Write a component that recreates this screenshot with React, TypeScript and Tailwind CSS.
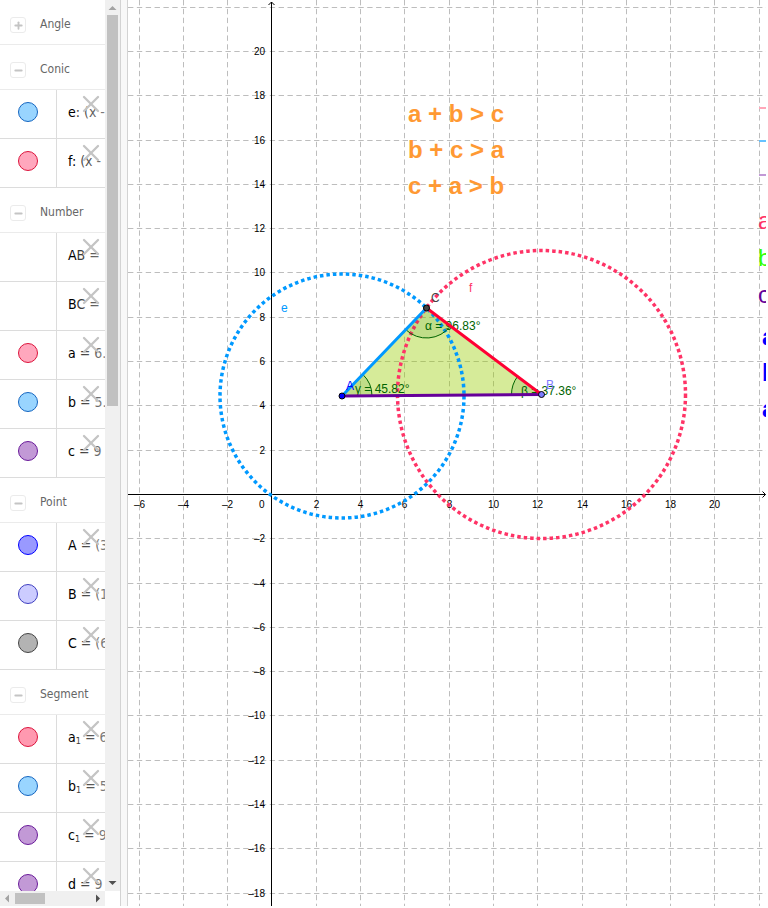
import { Minus, Plus, X } from "lucide-react";

interface Item {
  label: string;
  sub?: string;
  rest: string;
  dot?: string;
}

interface Group {
  name: string;
  open: boolean;
  items: Item[];
}

const RED = "border-[#dc143c] bg-[#ffa7bd]";
const BLUE = "border-[#1565c0] bg-[#99d5ff]";
const PURPLE = "border-[#6a1b9a] bg-[#c299d6]";

const groups: Group[] = [
  { name: "Angle", open: false, items: [] },
  {
    name: "Conic",
    open: true,
    items: [
      { label: "e:", rest: "(x -", dot: BLUE },
      { label: "f:", rest: "(x -", dot: RED },
    ],
  },
  {
    name: "Number",
    open: true,
    items: [
      { label: "AB", rest: "=" },
      { label: "BC", rest: "=" },
      { label: "a", rest: "= 6.", dot: RED },
      { label: "b", rest: "= 5.", dot: BLUE },
      { label: "c", rest: "= 9", dot: PURPLE },
    ],
  },
  {
    name: "Point",
    open: true,
    items: [
      { label: "A", rest: "= (3", dot: "border-[#0000ff] bg-[#9999ff]" },
      { label: "B", rest: "= (1", dot: "border-[#3f3fbf] bg-[#ccccff]" },
      { label: "C", rest: "= (6", dot: "border-[#444444] bg-[#b3b3b3]" },
    ],
  },
  {
    name: "Segment",
    open: true,
    items: [
      { label: "a", sub: "1", rest: "= 6", dot: "border-[#dc143c] bg-[#ff99b0]" },
      { label: "b", sub: "1", rest: "= 5", dot: BLUE },
      { label: "c", sub: "1", rest: "= 9", dot: PURPLE },
      { label: "d", rest: "= 9", dot: PURPLE },
    ],
  },
];

function Row({ item }: { item: Item }) {
  return (
    <div className="relative flex h-[49px] border-b border-[#dcdcdc]">
      <div className="flex w-[57px] shrink-0 items-center justify-center border-r border-[#dcdcdc] pb-1">
        {item.dot && (
          <button
            aria-label={`Toggle ${item.label}`}
            className={`size-5 rounded-full border ${item.dot}`}
          />
        )}
      </div>
      <div className="flex items-center pb-1 pl-[11px] text-sm whitespace-pre text-black">
        <span>
          {item.label}
          {item.sub && <sub className="text-[9px]">{item.sub}</sub>} {item.rest}
        </span>
      </div>
      <div className="absolute inset-y-0 right-0 w-7 bg-linear-to-r from-white/20 to-white/50">
        <button aria-label={`Delete ${item.label}`} className="block">
          <X size={28} strokeWidth={2} className="text-[#c4c4c4]" />
        </button>
      </div>
    </div>
  );
}

function Sidebar() {
  return (
    <aside className="flex w-[120px] shrink-0 flex-col font-['DejaVu_Sans_Condensed','Noto_Sans',sans-serif]">
      <div className="flex min-h-0 flex-1">
        <div className="w-[105px] overflow-hidden">
          {groups.map((group) => (
            <section key={group.name}>
              <h2 className="flex h-[45px] items-center gap-3.5 border-b border-[#ebebeb] pt-1 pl-2.5 text-xs text-[#666666]">
                <button
                  aria-label={`Toggle ${group.name}`}
                  className="mt-0.5 flex size-4 items-center justify-center rounded-[3px] border border-[#ebebeb] text-[#c4c4c4]"
                >
                  {group.open ? <Minus size={11} strokeWidth={4} /> : <Plus size={11} strokeWidth={4} />}
                </button>
                {group.name}
              </h2>
              {group.items.map((item) => (
                <Row key={item.label} item={item} />
              ))}
            </section>
          ))}
        </div>
        <div className="flex w-[15px] flex-col items-center bg-[#f0f0f0]">
          <svg width="15" height="15">
            <path d="M3.500 10h8l-4-4z" fill="#a3a3a3" />
          </svg>
          <div className="mb-auto h-[391px] w-[11px] bg-[#c1c1c1]" />
          <svg width="15" height="15">
            <path d="M3.500 5h8l-4 4z" fill="#505050" />
          </svg>
        </div>
      </div>
      <div className="flex h-[15px] w-[105px] items-center bg-[#f0f0f0]">
        <svg width="15" height="15">
          <path d="M9 3.500v8l-4-4z" fill="#a3a3a3" />
        </svg>
        <div className="mr-auto h-[11px] w-[30px] bg-[#c1c1c1]" />
        <svg width="15" height="15">
          <path d="M6 3.500v8l4-4z" fill="#505050" />
        </svg>
      </div>
    </aside>
  );
}

// Graphics view: 1 unit = 22.15px
const UNIT = 22.15;
const gridX = (x: number) => Math.floor(143.9 + x * UNIT) + 0.5;
const gridY = (y: number) => Math.floor(494.45 - y * UNIT) + 0.5;

const xTicks = [-6, -4, -2, 2, 4, 6, 8, 10, 12, 14, 16, 18, 20, 22];
const yTicks = [22, 20, 18, 16, 14, 12, 10, 8, 6, 4, 2, -2, -4, -6, -8, -10, -12, -14, -16, -18];

const A = { x: 214, y: 396 };
const B = { x: 413.5, y: 394.5 };
const C = { x: 298.5, y: 308 };

type Point = typeof A;

// Wedge at p, clockwise from the ray to q to the ray to r
function wedge(p: Point, q: Point, r: Point, radius = 30) {
  const a1 = Math.atan2(q.y - p.y, q.x - p.x);
  const a2 = Math.atan2(r.y - p.y, r.x - p.x);
  const at = (a: number) => `${p.x + radius * Math.cos(a)} ${p.y + radius * Math.sin(a)}`;
  return `M${p.x} ${p.y}L${at(a1)}A${radius} ${radius} 0 0 1 ${at(a2)}Z`;
}

const label = (n: number) => (n < 0 ? `–${-n}` : `${n}`);

const inequalities = ["a + b > c", "b + c > a", "c + a > b"];

const legend = [
  { text: "a", y: 229, color: "#ff3366" },
  { text: "b", y: 266, color: "#33ff00" },
  { text: "c", y: 303, color: "#660099" },
];

const sums = [
  { text: "a", y: 345 },
  { text: "b", y: 381 },
  { text: "a", y: 417 },
];

function GraphicsView() {
  return (
    <svg className="h-full w-full font-['Liberation_Sans',sans-serif]" role="img" aria-label="Triangle ABC">
      {/* Grid */}
      <g stroke="#bdbdbd" strokeDasharray="5.36 3.5">
        {xTicks.map((x) => (
          <line key={x} x1={gridX(x)} x2={gridX(x)} y1="0" y2="100%" />
        ))}
        {yTicks.map((y) => (
          <line key={y} x1="0" x2="100%" y1={gridY(y)} y2={gridY(y)} />
        ))}
      </g>

      {/* Axes */}
      <g stroke="#000" fill="none">
        <path d="M143.500 906V2M140.500 5l3-3 3 3" />
        <path d="M0 494.500H637.500M634.500 491.500l3 3-3 3" />
      </g>
      <g fontSize="10" fill="#000">
        {xTicks.slice(0, -1).map((x) => (
          <text key={x} x={gridX(x)} y="508" textAnchor="middle">{label(x)}</text>
        ))}
        {yTicks.slice(1).map((y) => (
          <text key={y} x="137" y={gridY(y) + 3.5} textAnchor="end">{label(y)}</text>
        ))}
        <text x="131" y="508">0</text>
      </g>

      {/* Triangle */}
      <path d={`M${A.x} ${A.y}L${B.x} ${B.y}L${C.x} ${C.y}Z`} fill="#99cc00" fillOpacity="0.4" />

      {/* Circles */}
      <g fill="none" strokeWidth="3.5" strokeDasharray="3.5 3">
        <circle cx={A.x} cy={A.y} r="122" stroke="#0099ff" />
        <circle cx={B.x} cy={B.y} r="144" stroke="#ff3366" />
      </g>

      {/* Angles */}
      <g fill="#006400" fillOpacity="0.1" stroke="#006400">
        <path d={wedge(C, B, A)} />
        <path d={wedge(A, C, B)} />
        <path d={wedge(B, A, C)} />
      </g>
      <g fontSize="12" fill="#006400">
        <text x="297" y="330">α = 96.83°</text>
        <text x="227" y="393">γ = 45.82°</text>
        <text x="393" y="395">β = 37.36°</text>
      </g>

      {/* Segments */}
      <g fill="none" strokeLinecap="round" strokeWidth="3">
        <path d={`M${A.x} ${A.y}L${B.x} ${B.y}`} stroke="#660099" />
        <path d={`M${A.x} ${A.y}L${C.x} ${C.y}`} stroke="#0099ff" />
        <path d={`M${C.x} ${C.y}L${B.x} ${B.y}`} stroke="#ff0033" />
      </g>

      {/* Points */}
      <g stroke="#000">
        <circle cx={A.x} cy={A.y} r="3" fill="#0000ff" />
        <circle cx={B.x} cy={B.y} r="3" fill="#7d7dff" />
        <circle cx={C.x} cy={C.y} r="3" fill="#444444" />
      </g>
      <g fontSize="12">
        <text x="218" y="390" fill="#0000ff">A</text>
        <text x="418" y="389" fill="#7d7dff">B</text>
        <text x="303" y="302" fill="#444444">C</text>
        <text x="153" y="312" fill="#0099ff">e</text>
        <text x="341" y="292" fill="#ff3366">f</text>
      </g>

      {/* Texts */}
      <g fontSize="24" fontWeight="bold" fill="#ff9933">
        {inequalities.map((text, i) => (
          <text key={text} x="280" y={122 + i * 36}>{text}</text>
        ))}
      </g>
      <g strokeWidth="2">
        <path d="M631 108h7" stroke="#ffa7b9" />
        <path d="M631 141h7" stroke="#66c2ff" />
        <path d="M631 175h7" stroke="#c299d6" />
      </g>
      <g fontSize="24">
        {legend.map((item) => (
          <text key={item.y} x="630" y={item.y} fill={item.color}>{item.text}</text>
        ))}
        {sums.map((item) => (
          <text key={item.y} x="634" y={item.y} fill="#0000ff" fontWeight="bold">{item.text}</text>
        ))}
      </g>
    </svg>
  );
}

export default function App() {
  return (
    <div className="flex h-screen bg-white pb-0.5">
      <Sidebar />
      <div className="w-2 shrink-0 border-x border-[#d3d3d3] bg-[#f8f8f8]" />
      <main className="mr-0.5 min-w-0 flex-1 overflow-hidden">
        <GraphicsView />
      </main>
    </div>
  );
}
